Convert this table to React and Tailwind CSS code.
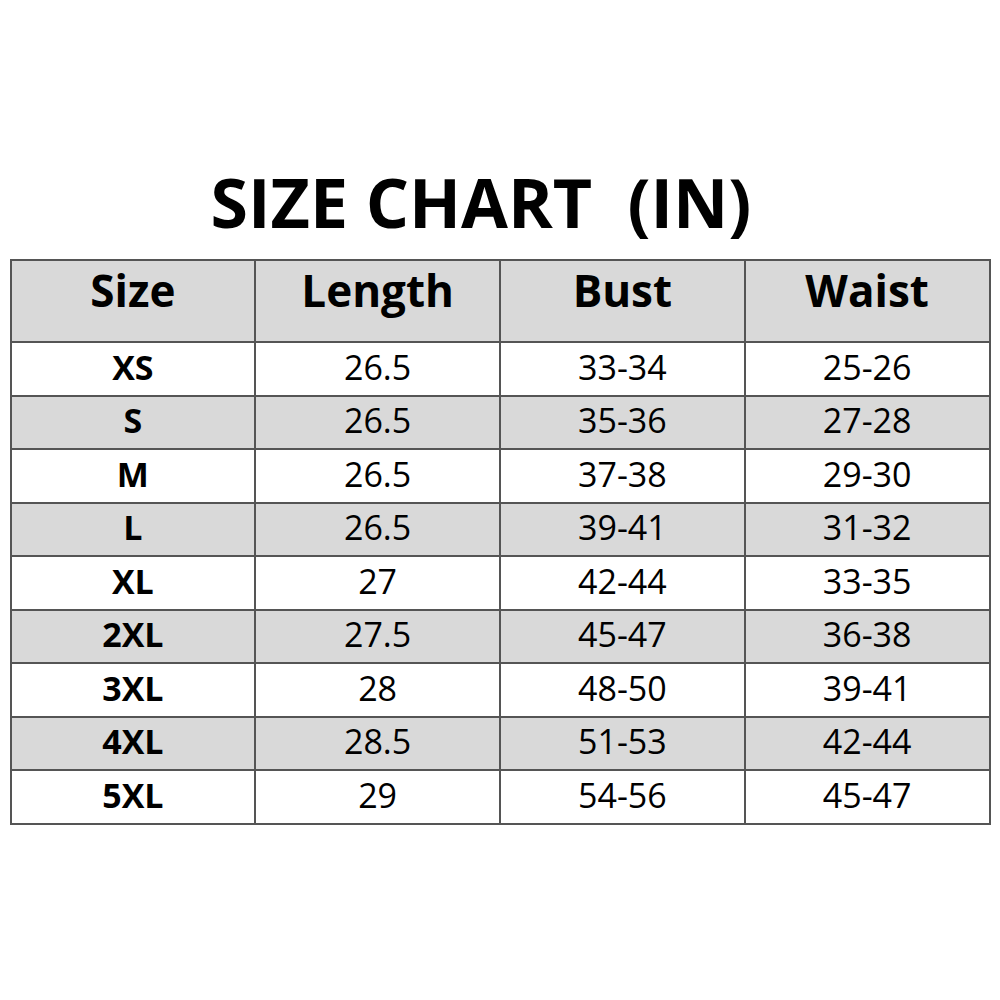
const headers = ['Size', 'Length', 'Bust', 'Waist'];

const rows = [
  ['XS', '26.5', '33-34', '25-26'],
  ['S', '26.5', '35-36', '27-28'],
  ['M', '26.5', '37-38', '29-30'],
  ['L', '26.5', '39-41', '31-32'],
  ['XL', '27', '42-44', '33-35'],
  ['2XL', '27.5', '45-47', '36-38'],
  ['3XL', '28', '48-50', '39-41'],
  ['4XL', '28.5', '51-53', '42-44'],
  ['5XL', '29', '54-56', '45-47'],
];

export default function App() {
  return (
    <div
      className="w-[1000px] h-[1000px] bg-white text-black flex flex-col items-center pt-[162px]"
      style={{ fontFamily: '"Open Sans", "Noto Sans", sans-serif' }}
    >
      <h1 className="text-[68px] font-bold leading-[80px] whitespace-pre ml-[-38px]">
        {'SIZE CHART  (IN)'}
      </h1>
      <table className="mt-[17px] w-[981px] border-collapse border-2 border-[#555] table-fixed">
        <thead>
          <tr className="bg-[#d9d9d9] h-[82px]">
            {headers.map((h) => (
              <th key={h} className="border-2 border-[#555] text-[44px] font-bold text-center leading-none pb-[22px]">
                {h}
              </th>
            ))}
          </tr>
        </thead>
        <tbody>
          {rows.map((r, i) => (
            <tr key={r[0]} className={i % 2 === 1 ? 'bg-[#d9d9d9] h-[53.5px]' : 'bg-white h-[53.5px]'}>
              {r.map((c, j) => (
                <td
                  key={j}
                  className={
                    j === 0
                      ? 'border-2 border-[#555] text-center text-[34px] font-bold leading-none pb-[4px]'
                      : 'border-2 border-[#555] text-center text-[34px] leading-none pb-[4px]'
                  }
                >
                  {c}
                </td>
              ))}
            </tr>
          ))}
        </tbody>
      </table>
    </div>
  );
}
